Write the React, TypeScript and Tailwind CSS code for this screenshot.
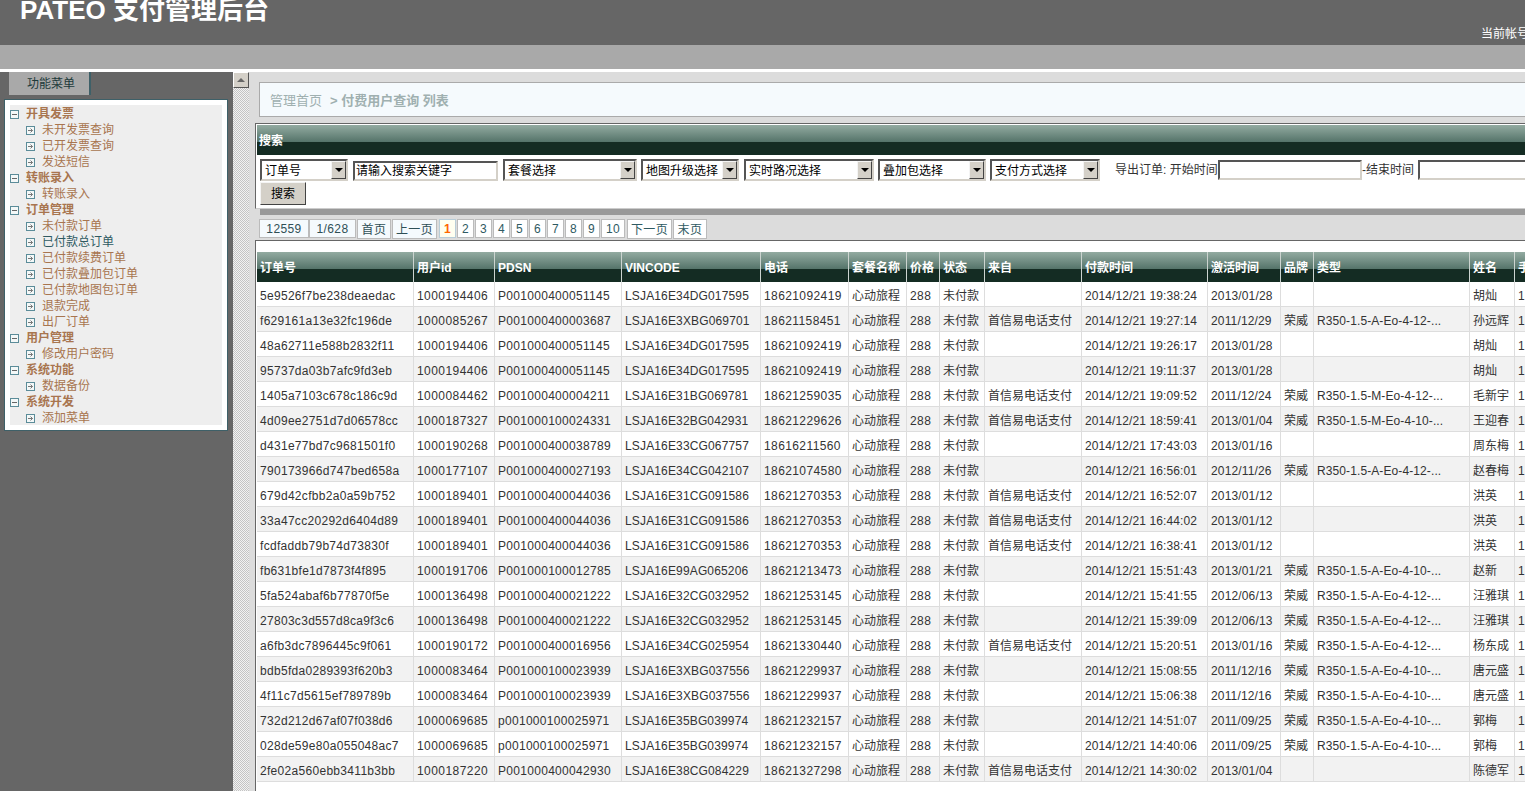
const menu = [
  { title: "开具发票", items: ["未开发票查询", "已开发票查询", "发送短信"] },
  { title: "转账录入", items: ["转账录入"] },
  {
    title: "订单管理",
    items: ["未付款订单", "已付款总订单", "已付款续费订单", "已付款叠加包订单", "已付款地图包订单", "退款完成", "出厂订单"],
  },
  { title: "用户管理", items: ["修改用户密码"] },
  { title: "系统功能", items: ["数据备份"] },
  { title: "系统开发", items: ["添加菜单"] },
];

// tracking differs per column: the source's hinted Arial runs wider on digits than on caps or punctuation
const columns = [
  { name: "订单号", width: "w-[157px]", track: "tracking-[0.3px]" },
  { name: "用户id", width: "w-[81px]", track: "tracking-[0.45px]" },
  { name: "PDSN", width: "w-[127px]", track: "tracking-[0.3px]" },
  { name: "VINCODE", width: "w-[139px]", track: "tracking-[0.15px]" },
  { name: "电话", width: "w-[88px]", track: "tracking-[0.4px]" },
  { name: "套餐名称", width: "w-[58px]", track: "tracking-normal" },
  { name: "价格", width: "w-[33px]", track: "tracking-[0.4px]" },
  { name: "状态", width: "w-[45px]", track: "tracking-normal" },
  { name: "来自", width: "w-[97px]", track: "tracking-normal" },
  { name: "付款时间", width: "w-[126px]", track: "tracking-[0.1px]" },
  { name: "激活时间", width: "w-[73px]", track: "tracking-[0.15px]" },
  { name: "品牌", width: "w-[33px]", track: "tracking-normal" },
  { name: "类型", width: "w-[156px]", track: "tracking-[0.1px]" },
  { name: "姓名", width: "w-[45px]", track: "tracking-normal" },
  { name: "手机", width: "w-[100px]", track: "tracking-[0.4px]" },
];

const EO12 = "R350-1.5-A-Eo-4-12-...";
const EO10 = "R350-1.5-A-Eo-4-10-...";
const PAY = "首信易电话支付";

const rows: string[][] = [
  ["5e9526f7be238deaedac", "1000194406", "P001000400051145", "LSJA16E34DG017595", "18621092419", "", "2014/12/21 19:38:24", "2013/01/28", "", "", "胡灿"],
  ["f629161a13e32fc196de", "1000085267", "P001000400003687", "LSJA16E3XBG069701", "18621158451", PAY, "2014/12/21 19:27:14", "2011/12/29", "荣威", EO12, "孙远辉"],
  ["48a62711e588b2832f11", "1000194406", "P001000400051145", "LSJA16E34DG017595", "18621092419", "", "2014/12/21 19:26:17", "2013/01/28", "", "", "胡灿"],
  ["95737da03b7afc9fd3eb", "1000194406", "P001000400051145", "LSJA16E34DG017595", "18621092419", "", "2014/12/21 19:11:37", "2013/01/28", "", "", "胡灿"],
  ["1405a7103c678c186c9d", "1000084462", "P001000400004211", "LSJA16E31BG069781", "18621259035", PAY, "2014/12/21 19:09:52", "2011/12/24", "荣威", "R350-1.5-M-Eo-4-12-...", "毛新宇"],
  ["4d09ee2751d7d06578cc", "1000187327", "P001000100024331", "LSJA16E32BG042931", "18621229626", PAY, "2014/12/21 18:59:41", "2013/01/04", "荣威", "R350-1.5-M-Eo-4-10-...", "王迎春"],
  ["d431e77bd7c9681501f0", "1000190268", "P001000400038789", "LSJA16E33CG067757", "18616211560", "", "2014/12/21 17:43:03", "2013/01/16", "", "", "周东梅"],
  ["790173966d747bed658a", "1000177107", "P001000400027193", "LSJA16E34CG042107", "18621074580", "", "2014/12/21 16:56:01", "2012/11/26", "荣威", EO12, "赵春梅"],
  ["679d42cfbb2a0a59b752", "1000189401", "P001000400044036", "LSJA16E31CG091586", "18621270353", PAY, "2014/12/21 16:52:07", "2013/01/12", "", "", "洪英"],
  ["33a47cc20292d6404d89", "1000189401", "P001000400044036", "LSJA16E31CG091586", "18621270353", PAY, "2014/12/21 16:44:02", "2013/01/12", "", "", "洪英"],
  ["fcdfaddb79b74d73830f", "1000189401", "P001000400044036", "LSJA16E31CG091586", "18621270353", PAY, "2014/12/21 16:38:41", "2013/01/12", "", "", "洪英"],
  ["fb631bfe1d7873f4f895", "1000191706", "P001000100012785", "LSJA16E99AG065206", "18621213473", "", "2014/12/21 15:51:43", "2013/01/21", "荣威", EO10, "赵新"],
  ["5fa524abaf6b77870f5e", "1000136498", "P001000400021222", "LSJA16E32CG032952", "18621253145", "", "2014/12/21 15:41:55", "2012/06/13", "荣威", EO12, "汪雅琪"],
  ["27803c3d557d8ca9f3c6", "1000136498", "P001000400021222", "LSJA16E32CG032952", "18621253145", "", "2014/12/21 15:39:09", "2012/06/13", "荣威", EO12, "汪雅琪"],
  ["a6fb3dc7896445c9f061", "1000190172", "P001000400016956", "LSJA16E34CG025954", "18621330440", PAY, "2014/12/21 15:20:51", "2013/01/16", "荣威", EO12, "杨东成"],
  ["bdb5fda0289393f620b3", "1000083464", "P001000100023939", "LSJA16E3XBG037556", "18621229937", "", "2014/12/21 15:08:55", "2011/12/16", "荣威", EO10, "唐元盛"],
  ["4f11c7d5615ef789789b", "1000083464", "P001000100023939", "LSJA16E3XBG037556", "18621229937", "", "2014/12/21 15:06:38", "2011/12/16", "荣威", EO10, "唐元盛"],
  ["732d212d67af07f038d6", "1000069685", "p001000100025971", "LSJA16E35BG039974", "18621232157", "", "2014/12/21 14:51:07", "2011/09/25", "荣威", EO10, "郭梅"],
  ["028de59e80a055048ac7", "1000069685", "p001000100025971", "LSJA16E35BG039974", "18621232157", "", "2014/12/21 14:40:06", "2011/09/25", "荣威", EO10, "郭梅"],
  ["2fe02a560ebb3411b3bb", "1000187220", "P001000400042930", "LSJA16E38CG084229", "18621327298", PAY, "2014/12/21 14:30:02", "2013/01/04", "", "", "陈德军"],
];

const GRAD = "bg-[linear-gradient(#93aba1_0%,#55746a_56%,#142c23_57%,#142c23_100%)]";

function GroupIcon() {
  return (
    <svg width="9" height="9" viewBox="0 0 9 9" className="shrink-0">
      <rect x="0.5" y="0.5" width="8" height="8" fill="#f4f8f8" stroke="#5b8c99" />
      <path d="M2 4.5h5" stroke="#666" />
    </svg>
  );
}

function ItemIcon() {
  return (
    <svg width="9" height="9" viewBox="0 0 9 9" className="shrink-0">
      <rect x="0.5" y="0.5" width="8" height="8" fill="#f4f8f8" stroke="#5b8c99" />
      <path d="M2 4.5h4.5M4.5 2.5l2 2-2 2" stroke="#777" fill="none" />
    </svg>
  );
}

function Sidebar() {
  return (
    <div className="w-[233px] shrink-0 bg-[#666666]">
      <div className="ml-[9px] h-[23px] w-[82px] border-r-2 border-[#3e6068] bg-[#a9a9a9] pl-[4px] text-center text-[12px] leading-[25px] text-[#1d3a3a]">
        功能菜单
      </div>
      <div className="ml-[4px] mt-[4px] w-[224px] border border-[#3e6068] bg-white p-[5px]">
        <div className="bg-[#eeeeee]">
          {menu.map((group) => (
            <div key={group.title}>
              <div className="flex h-[16px] items-center gap-[7px] pt-[2px] text-[12px] font-bold text-[#a8754f]">
                <GroupIcon />
                {group.title}
              </div>
              {group.items.map((item) => (
                <div
                  key={item}
                  className={`flex h-[16px] items-center gap-[7px] pl-[16px] pt-[2px] text-[12px] ${
                    item === "已付款总订单" ? "text-[#2f5a62]" : "text-[#a8754f]"
                  }`}
                >
                  <ItemIcon />
                  {item}
                </div>
              ))}
            </div>
          ))}
        </div>
      </div>
    </div>
  );
}

function Splitter() {
  return (
    <div className="w-[16px] shrink-0 bg-[repeating-conic-gradient(#c4c4c4_0_25%,#f2f2f2_0_50%)] bg-[length:2px_2px]">
      <div className="flex h-[16px] w-[16px] items-center justify-center border border-t-white border-l-white border-r-[#555] border-b-[#555] bg-[#d4d0c8]">
        <div className="h-0 w-0 border-x-[4px] border-b-[4px] border-x-transparent border-b-[#666]" />
      </div>
    </div>
  );
}

function FakeSelect({ label, width }: { label: string; width: string }) {
  return (
    <div className={`flex h-[22px] shrink-0 border-2 border-t-[#555] border-l-[#555] border-r-[#d4d0c8] border-b-[#d4d0c8] bg-white ${width}`}>
      <div className="min-w-0 flex-1 overflow-hidden whitespace-nowrap pl-[3px] text-[12px] leading-[20px] text-black">{label}</div>
      <div className="flex w-[15px] shrink-0 items-center justify-center border border-t-[#f4f4f4] border-l-[#f4f4f4] border-r-[#444] border-b-[#444] bg-[#d4d0c8]">
        <div className="h-0 w-0 border-x-[4px] border-t-[4px] border-x-transparent border-t-black" />
      </div>
    </div>
  );
}

function FakeInput({ value, width }: { value?: string; width: string }) {
  return (
    <div className={`h-[20px] shrink-0 overflow-hidden whitespace-nowrap border-2 border-t-[#555] border-l-[#555] border-r-[#d4d0c8] border-b-[#d4d0c8] bg-white pl-[1px] text-[12px] leading-[16px] text-black ${width}`}>
      {value}
    </div>
  );
}

function SearchPanel() {
  return (
    <div className="ml-[6px] mt-[6px] w-[1400px] border-t border-l border-b border-t-[#666] border-l-[#666] border-b-[#ccc] bg-white pl-px pt-px shadow-[5px_6px_0_#999999]">
      <div className={`h-[30px] pl-[2px] pt-[8px] text-[12px] font-bold leading-[16px] text-white ${GRAD}`}>搜索</div>
      <div className="h-[53px] pl-[3px] pt-[4px]">
        <div className="flex items-start">
          <FakeSelect label="订单号" width="w-[88px]" />
          <div className="w-[5px] shrink-0" />
          <FakeInput value="请输入搜索关键字" width="w-[145px] mt-[2px]" />
          <div className="w-[5px] shrink-0" />
          <FakeSelect label="套餐选择" width="w-[134px]" />
          <div className="w-[4px] shrink-0" />
          <FakeSelect label="地图升级选择" width="w-[98px]" />
          <div className="w-[5px] shrink-0" />
          <FakeSelect label="实时路况选择" width="w-[130px]" />
          <div className="w-[4px] shrink-0" />
          <FakeSelect label="叠加包选择" width="w-[108px]" />
          <div className="w-[4px] shrink-0" />
          <FakeSelect label="支付方式选择" width="w-[110px]" />
          <div className="w-[118px] shrink-0 whitespace-nowrap pl-[15px] text-[12px] leading-[22px] text-[#333]">导出订单: 开始时间</div>
          <FakeInput width="w-[144px] mt-px" />
          <div className="w-[56px] shrink-0 whitespace-nowrap text-[12px] leading-[22px] text-[#333]">-结束时间</div>
          <FakeInput width="w-[144px] mt-px" />
        </div>
        <button className="mt-px block h-[23px] w-[46px] border border-t-[#f4f4f4] border-l-[#f4f4f4] border-r-[#444] border-b-[#444] bg-[#d4d0c8] text-[12px] text-black">
          搜索
        </button>
      </div>
    </div>
  );
}

function PageBox({ label, width, kind }: { label: string; width: string; kind?: "info" | "back" | "next" | "on" }) {
  const tone =
    kind === "on"
      ? "bg-[#fffff0] border-[#b8cdd8] font-bold text-[#ff6600]"
      : kind === "info" || kind === "back"
        ? "bg-[#f5fafd] border-[#bbb] text-[#2f4f56]"
        : "bg-white border-[#bbb] text-[#2f5a62]";
  const height = kind === "back" || kind === "next" ? "h-[20px] leading-[20px]" : "h-[19px] leading-[18px]";
  return <div className={`shrink-0 border text-center text-[12px] tracking-[0.4px] ${height} ${width} ${tone}`}>{label}</div>;
}

function Pagination() {
  return (
    <div className="ml-[10px] mt-[10px] flex h-[21px] items-start">
      <PageBox label="12559" width="w-[50px]" kind="info" />
      <PageBox label="1/628" width="w-[47px]" kind="info" />
      <div className="w-px shrink-0" />
      <PageBox label="首页" width="w-[34px]" kind="back" />
      <div className="w-px shrink-0" />
      <PageBox label="上一页" width="w-[45px]" kind="back" />
      <div className="w-[2px] shrink-0" />
      <PageBox label="1" width="w-[17px]" kind="on" />
      <div className="flex gap-px pl-px">
        {["2", "3", "4", "5", "6", "7", "8", "9"].map((n) => (
          <PageBox key={n} label={n} width="w-[17px]" />
        ))}
        <PageBox label="10" width="w-[24px]" />
      </div>
      <div className="w-[2px] shrink-0" />
      <PageBox label="下一页" width="w-[45px]" kind="next" />
      <div className="w-px shrink-0" />
      <PageBox label="末页" width="w-[34px]" kind="next" />
    </div>
  );
}

function OrdersTable() {
  return (
    <div className="ml-[6px] min-h-[560px] w-[1400px] border-t border-l border-[#666] bg-white pl-px pt-[11px]">
      <table className="w-[1358px] table-fixed border-separate border-spacing-0 text-[12px]">
        <colgroup>
          {columns.map((c) => (
            <col key={c.name} className={c.width} />
          ))}
        </colgroup>
        <thead>
          <tr>
            {columns.map((c) => (
              <th
                key={c.name}
                className={`h-[30px] overflow-hidden whitespace-nowrap border-r border-[#ccd4d0] pl-[3px] pt-[2px] text-left text-[12px] font-bold text-white ${GRAD}`}
              >
                {c.name}
              </th>
            ))}
          </tr>
        </thead>
        <tbody>
          {rows.map((r, i) => {
            const cells = [r[0], r[1], r[2], r[3], r[4], "心动旅程", "288", "未付款", r[5], r[6], r[7], r[8], r[9], r[10], r[4]];
            return (
              <tr key={r[0]} className={i % 2 === 1 ? "bg-[#f2f2f2]" : "bg-white"}>
                {cells.map((cell, j) => (
                  <td
                    key={j}
                    className={`h-[25px] overflow-hidden whitespace-nowrap border-r border-b border-[#dddddd] pl-[3px] pt-[3px] text-[12px] text-[#333] ${columns[j].track}`}
                  >
                    {cell}
                  </td>
                ))}
              </tr>
            );
          })}
        </tbody>
      </table>
    </div>
  );
}

export default function App() {
  return (
    <div className="flex h-[791px] flex-col overflow-hidden bg-white [font-family:'Liberation_Sans','Noto_Sans_CJK_SC',sans-serif]">
      <div className="flex h-[45px] shrink-0 bg-[#666666]">
        <div className="flex-1 whitespace-nowrap pl-[20px] text-[26px] font-bold leading-[20px] text-white">PATEO 支付管理后台</div>
        <div className="w-[44px] shrink-0 overflow-hidden whitespace-nowrap pt-[26px] text-[12px] leading-[16px] text-white">当前帐号</div>
      </div>
      <div className="h-[24px] shrink-0 bg-[#a9a9a9]" />
      <div className="h-[3px] shrink-0 bg-white" />
      <div className="flex min-h-0 flex-1">
        <Sidebar />
        <Splitter />
        <div className="min-w-0 flex-1 overflow-hidden bg-[#dcdcdc] pt-[10px]">
          <div className="ml-[10px] h-[35px] border-y border-l border-[#aaaaaa] bg-[#f5fafd] pl-[10px] text-[13px] font-bold leading-[35px] text-[#9fb0b0]">
            <span className="font-normal">管理首页</span>
            <span className="ml-[8px]">&gt; 付费用户查询 列表</span>
          </div>
          <SearchPanel />
          <Pagination />
          <OrdersTable />
        </div>
      </div>
    </div>
  );
}
